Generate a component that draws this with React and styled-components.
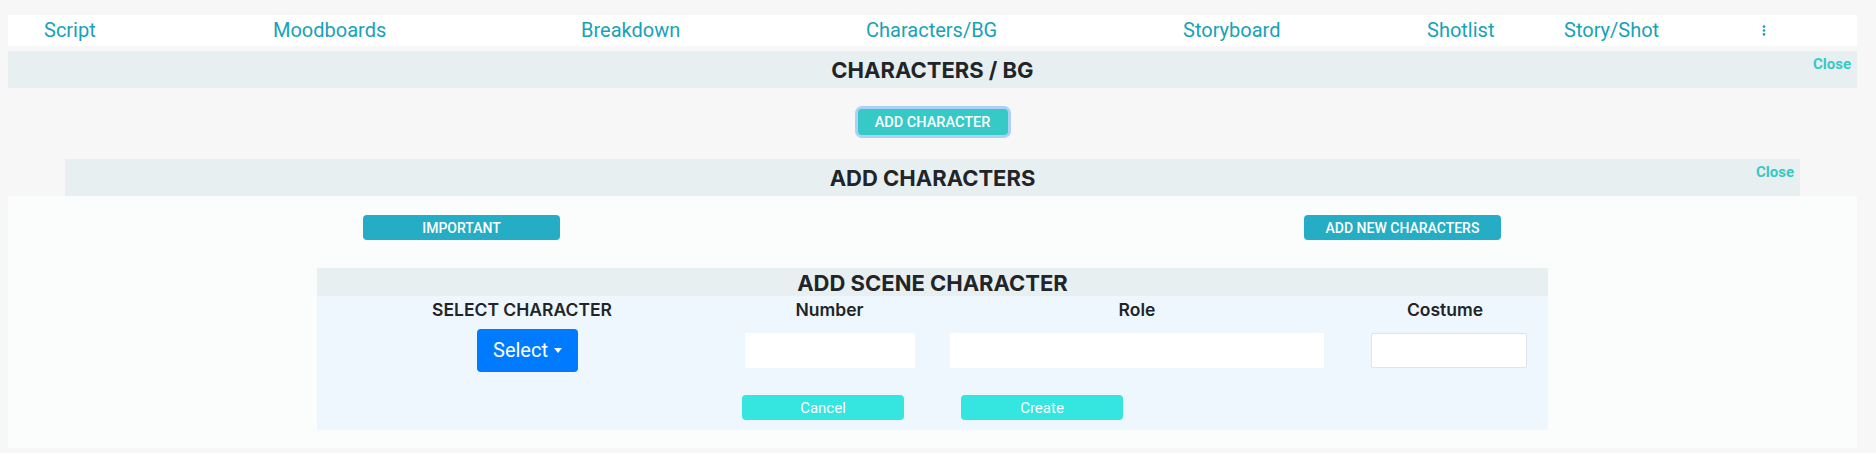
import React from 'react'
import styled, { createGlobalStyle } from 'styled-components'

const GlobalStyle = createGlobalStyle`
    body {
        margin: 0;
        background: #f7f7f7;
        font-family: Roboto, "Liberation Sans", sans-serif;
        color: #212529;
    }
`

const headingFont = 'Inter, "Noto Sans", "Liberation Sans", sans-serif'

const Page = styled.div`
    padding: 15px 19px 5px 8px;
`

const Nav = styled.nav`
    display: flex;
    align-items: center;
    height: 31px;
    background: #fff;
    padding-left: 36px;
`

const NavLink = styled.a`
    flex: 0 0 ${p => p.$w}px;
    font-size: 20px;
    line-height: 31px;
    color: #17a2b8;
    text-decoration: none;
    display: flex;
    align-items: center;
`

const SectionHeader = styled.div`
    position: relative;
    height: 37px;
    margin: ${p => (p.$inset ? '0 57px' : '5px 0 0')};
    background: #e8eff1;
    display: flex;
    align-items: center;
    justify-content: center;
`

const HeaderTitle = styled.h2`
    margin: 0;
    font-family: ${headingFont};
    font-size: 22px;
    font-weight: 700;
    color: #212529;
`

const CloseLink = styled.a`
    position: absolute;
    top: 4px;
    right: 6px;
    font-size: 15px;
    font-weight: 700;
    color: #36c9c6;
    cursor: pointer;
`

const ButtonBar = styled.div`
    height: 71px;
    display: flex;
    justify-content: center;
    padding-top: 21px;
    box-sizing: border-box;
`

const AddButton = styled.button`
    width: 150px;
    height: 26px;
    border: none;
    border-radius: 4px;
    background: #36c9c6;
    box-shadow: 0 0 0 3px rgba(0, 123, 255, 0.3);
    color: #fff;
    font-family: inherit;
    font-size: 14.5px;
    font-weight: 500;
    padding: 0;
`

const Panel = styled.div`
    background: #fbfdfc;
    padding: 19px 0 18px;
`

const TopActions = styled.div`
    display: flex;
    justify-content: space-between;
    padding: 0 356px 0 355px;
`

const InfoButton = styled.button`
    width: 197px;
    height: 25px;
    border: none;
    border-radius: 4px;
    background: #24adc4;
    color: #fff;
    font-family: inherit;
    font-size: 14px;
    font-weight: 500;
    padding: 0;
`

const Scene = styled.section`
    width: 1231px;
    margin: 28px auto 0;
`

const SceneHeader = styled.div`
    height: 28px;
    background: #e8eff1;
    display: flex;
    justify-content: center;
`

const SceneTitle = styled.h3`
    margin: 0;
    font-family: ${headingFont};
    font-size: 22px;
    line-height: 30px;
    font-weight: 700;
    color: #212529;
`

const SceneBody = styled.div`
    background: #eff7fe;
    padding: 4px 0 10px;
`

const FieldGrid = styled.div`
    display: grid;
    grid-template-columns: 410px 205px 410px 206px;
`

const Col = styled.div`
    display: flex;
    flex-direction: column;
    align-items: center;
`

const FieldLabel = styled.div`
    font-family: ${headingFont};
    font-size: 17.5px;
    line-height: 20px;
    font-weight: 600;
    color: #212529;
`

const Control = styled.div`
    width: 100%;
    box-sizing: border-box;
    height: 43px;
    margin-top: 9px;
    padding: ${p => p.$pad};
    display: flex;
    align-items: center;
    justify-content: center;
`

const TextInput = styled.input`
    width: 100%;
    height: 35px;
    box-sizing: border-box;
    border: ${p => (p.$bordered ? '1px solid #dfe3ea' : 'none')};
    border-radius: ${p => (p.$bordered ? '2px' : '0')};
    background: #fff;
    outline: none;
`

const SelectButton = styled.button`
    width: 101px;
    height: 43px;
    border: none;
    border-radius: 4px;
    background: #007bff;
    color: #fff;
    font-family: inherit;
    font-size: 20px;
    display: flex;
    align-items: center;
    justify-content: center;
    gap: 6px;
    padding: 0 0 2px;
`

const Caret = styled.span`
    width: 0;
    height: 0;
    border-left: 4.5px solid transparent;
    border-right: 4.5px solid transparent;
    border-top: 5px solid #fff;
    margin-top: 1px;
`

const Actions = styled.div`
    display: flex;
    justify-content: center;
    gap: 57px;
    margin-top: 23px;
`

const MintButton = styled.button`
    width: 162px;
    height: 25px;
    border: none;
    border-radius: 4px;
    background: #35e5df;
    color: #fff;
    font-family: inherit;
    font-size: 15px;
    padding: 0;
`

const navItems = [
    { label: 'Script', w: 229 },
    { label: 'Moodboards', w: 308 },
    { label: 'Breakdown', w: 285 },
    { label: 'Characters/BG', w: 317 },
    { label: 'Storyboard', w: 244 },
    { label: 'Shotlist', w: 137 },
    { label: 'Story/Shot', w: 198 },
]

const Kebab = () => (
    <svg width="4" height="11" viewBox="0 0 4 11">
        <circle cx="2" cy="1.6" r="1.3" fill="#17a2b8" />
        <circle cx="2" cy="5.5" r="1.3" fill="#17a2b8" />
        <circle cx="2" cy="9.4" r="1.3" fill="#17a2b8" />
    </svg>
)

export default function App() {
    return (
        <Page>
            <GlobalStyle />
            <Nav>
                {navItems.map(item => (
                    <NavLink key={item.label} $w={item.w}>
                        {item.label}
                    </NavLink>
                ))}
                <NavLink $w={20}>
                    <Kebab />
                </NavLink>
            </Nav>

            <SectionHeader>
                <HeaderTitle>CHARACTERS / BG</HeaderTitle>
                <CloseLink>Close</CloseLink>
            </SectionHeader>

            <ButtonBar>
                <AddButton>ADD CHARACTER</AddButton>
            </ButtonBar>

            <SectionHeader $inset>
                <HeaderTitle>ADD CHARACTERS</HeaderTitle>
                <CloseLink>Close</CloseLink>
            </SectionHeader>

            <Panel>
                <TopActions>
                    <InfoButton>IMPORTANT</InfoButton>
                    <InfoButton>ADD NEW CHARACTERS</InfoButton>
                </TopActions>

                <Scene>
                    <SceneHeader>
                        <SceneTitle>ADD SCENE CHARACTER</SceneTitle>
                    </SceneHeader>
                    <SceneBody>
                        <FieldGrid>
                            <Col>
                                <FieldLabel>SELECT CHARACTER</FieldLabel>
                                <Control $pad="0 0 0 11px">
                                    <SelectButton>
                                        Select <Caret />
                                    </SelectButton>
                                </Control>
                            </Col>
                            <Col>
                                <FieldLabel>Number</FieldLabel>
                                <Control $pad="0 17px 0 18px">
                                    <TextInput type="text" />
                                </Control>
                            </Col>
                            <Col>
                                <FieldLabel>Role</FieldLabel>
                                <Control $pad="0 18px">
                                    <TextInput type="text" />
                                </Control>
                            </Col>
                            <Col>
                                <FieldLabel>Costume</FieldLabel>
                                <Control $pad="0 21px 0 29px">
                                    <TextInput type="text" $bordered />
                                </Control>
                            </Col>
                        </FieldGrid>
                        <Actions>
                            <MintButton>Cancel</MintButton>
                            <MintButton>Create</MintButton>
                        </Actions>
                    </SceneBody>
                </Scene>
            </Panel>
        </Page>
    )
}
